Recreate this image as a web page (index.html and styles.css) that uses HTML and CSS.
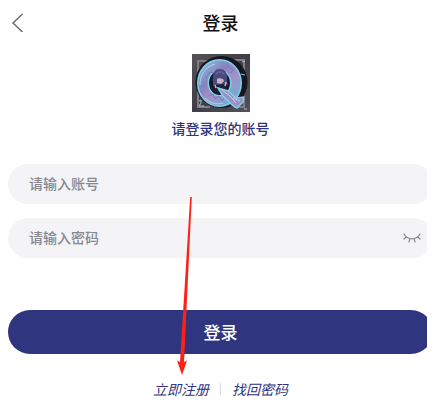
FILE: index.html
```html
<!DOCTYPE html>
<html lang="zh-CN">
<head>
  <meta charset="UTF-8">
  <meta name="viewport" content="width=device-width, initial-scale=1.0">
  <title>登录</title>
  <link rel="stylesheet" href="styles.css">
</head>
<body>

  <div class="screen">
    <div class="content">

      <!-- 顶部导航 -->
      <header class="top-bar">
        <button class="back-button" type="button" aria-label="返回">
          <svg width="12" height="20" viewBox="0 0 12 20" fill="none" stroke="#666" stroke-width="1.4">
            <path d="M10.500 2L1 11l9.500 9"/>
          </svg>
        </button>
        <h1>登录</h1>
      </header>

      <div class="brand">
        <svg class="logo" viewBox="0 0 58 58" role="img" aria-label="Logo">
          <defs>
            <linearGradient id="metal" x1="0" y1="0" x2="1" y2="1">
              <stop offset="0" stop-color="#55525a"/>
              <stop offset="0.5" stop-color="#3f3e46"/>
              <stop offset="1" stop-color="#555059"/>
            </linearGradient>
            <linearGradient id="ring" x1="0" y1="0" x2="0.8" y2="1">
              <stop offset="0" stop-color="#8fb4dc"/>
              <stop offset="0.35" stop-color="#8583bd"/>
              <stop offset="0.65" stop-color="#a491c9"/>
              <stop offset="1" stop-color="#79a9d4"/>
            </linearGradient>
          </defs>
          <rect width="58" height="58" fill="url(#metal)"/>
          <path d="M6 52V7h14M38 6h14v10M52 45v8H42M6 44v9h12" fill="none" stroke="#827b80" stroke-width="2"/>
          <circle cx="29.500" cy="28" r="26" fill="#15161e"/>
          <!-- 光环 -->
          <ellipse cx="27.500" cy="29" rx="16.500" ry="18" fill="#181a2b" stroke="#7fd0e8" stroke-width="12"/>
          <ellipse cx="27.500" cy="29" rx="16.500" ry="18" fill="none" stroke="url(#ring)" stroke-width="9"/>
          <path d="M8 31c0-10 5-18 15-21M13 44c5 5 11 7 18 5" fill="none" stroke="#a5d8ec" stroke-width="1"/>
          <path d="M14 24l4-6 3 1 5-5M36 12l5 4-2 3M17 42l4-2 2 5 4-3 3 5 3-4" fill="none" stroke="#7779b4" stroke-width="1"/>
          <!-- 人物 -->
          <path d="M21 28c-1-9 2-13 7-13s8 4 7 12l1 4-3-1-9 1-3 1z" fill="#4a4a80"/>
          <path d="M24 20c2-3 6-3 8 0" fill="none" stroke="#6965a0" stroke-width="1.500"/>
          <path d="M25 25l2-1 4 1 1 2-3 3-4-1z" fill="#c7b0c3"/>
          <path d="M22 38l2-6 4-1 5 1 3 7z" fill="#20223b"/>
          <path d="M23 31l1 3M34 28l-1 4" stroke="#c9b3c5" stroke-width="1.500"/>
          <path d="M26 34l10 3 8 7 8-1-1 5-6 6-5-3-9-9z" fill="#9a90c6" stroke="#7fd0e8" stroke-width="1.500"/>
          <path d="M30 36l8 6 6 7M41 44l7 3" fill="none" stroke="#b9d2ec" stroke-width="1"/>
          <path d="M7 47l2-1v3l-2 3h5M50 8l3-1M49 20l4 1M52 55h3" fill="none" stroke="#9fc2d0" stroke-width="1"/>
        </svg>
        <p class="subtitle">请登录您的账号</p>
      </div>

      <form class="login-form">
        <div class="field">
          <input type="text" name="account" placeholder="请输入账号" aria-label="账号">
        </div>
        <div class="field">
          <input type="password" name="password" placeholder="请输入密码" aria-label="密码">
          <button class="eye-button" type="button" aria-label="显示密码">
            <svg width="18" height="10" viewBox="0 0 18 10" fill="none" stroke="#85858a" stroke-width="1.200" stroke-linecap="round">
              <path d="M1 1c3.500 6.300 12.500 6.300 16 0M3.300 4L1 6M7 5.800L6 9M11 5.800L12 9M14.700 4L17 6"/>
            </svg>
          </button>
        </div>
        <button class="submit-button" type="submit">登录</button>
      </form>

      <nav class="links">
        <a href="#register">立即注册</a>
        <span class="divider"></span>
        <a href="#recover">找回密码</a>
      </nav>
    </div>

    <!-- 指向注册入口的箭头 -->
    <svg class="arrow" width="12" height="180" viewBox="0 0 12 180" fill="#ff2114" aria-hidden="true">
      <path d="M12.200 1h1.600L6 166l3-1.500L4 179 -1 164.500l3 1.500z"/>
    </svg>
  </div>

</body>
</html>
```

FILE: styles.css
```css
* {
  box-sizing: border-box;
}

body {
  margin: 0;
  background: #fff;
  color: #111;
  font-family: "Noto Sans CJK SC", sans-serif;
  font-size: 14px;
  line-height: 20px;
}

button,
input {
  font: inherit;
  border: none;
  padding: 0;
  background: none;
}

button {
  cursor: pointer;
}

svg {
  display: block;
}

.screen {
  position: relative;
  margin-right: 7px;
  overflow: hidden;
}

/* 内容区略宽于可视区域 */
.content {
  margin: 0 -6px 0 8px;
  padding-bottom: 6px;
}

.top-bar {
  display: grid;
  grid-template-columns: 24px 1fr 24px;
  align-items: center;
  height: 44px;
}

.back-button {
  padding-left: 4px;
}

h1 {
  margin: 0;
  font-size: 18px;
  font-weight: 500;
  line-height: 24px;
  text-align: center;
}

.brand {
  display: flex;
  flex-direction: column;
  align-items: center;
  gap: 6px;
  padding-top: 10px;
}

.logo {
  width: 58px;
  height: 58px;
}

.subtitle {
  margin: 0;
  color: #303480;
  font-weight: 500;
}

.login-form {
  display: flex;
  flex-direction: column;
  gap: 14px;
  margin-top: 26px;
}

.field {
  display: flex;
  align-items: center;
  height: 40px;
  padding: 0 12px 0 21px;
  border-radius: 20px;
  background: #f4f4f7;
}

.field input {
  flex: 1;
  min-width: 0;
  height: 40px;
  padding-bottom: 2px;
  outline: none;
  color: #333;
}

.field input::placeholder {
  color: #858791;
  font-weight: 500;
  opacity: 1;
}

.submit-button {
  height: 44px;
  margin-top: 38px;
  border-radius: 22px;
  background: #303580;
  color: #fff;
  font-size: 17px;
  font-weight: 500;
}

.links {
  display: flex;
  align-items: center;
  justify-content: center;
  gap: 11px;
  margin-top: 25px;
}

.links a {
  color: #303480;
  font-style: italic;
  text-decoration: none;
}

.divider {
  width: 1px;
  height: 12px;
  background: #d9d9e2;
}

.arrow {
  position: absolute;
  top: 196px;
  left: 178px;
  overflow: visible;
  pointer-events: none;
}
```
